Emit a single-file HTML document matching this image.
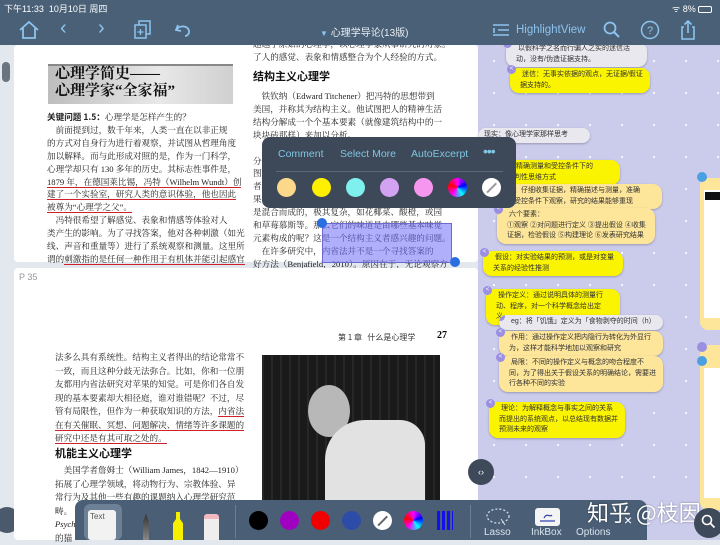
<!DOCTYPE html>
<html><head><meta charset="utf-8"><style>
*{margin:0;padding:0;box-sizing:border-box}
body{width:720px;height:540px;overflow:hidden;position:relative;background:#e3e8ef;font-family:"Liberation Sans","Noto Sans CJK SC",sans-serif}
.a{position:absolute}
.top{left:0;top:0;width:720px;height:45px;background:#4a6076;z-index:5}
.st{color:#fff;font-size:9px;top:2px}
.ic{color:#8cc4ef}
.page{background:#fff;border-radius:4px}
.bk{font-family:"Liberation Serif","Noto Serif CJK SC",serif;font-size:8.6px;line-height:12.9px;color:#222;white-space:nowrap}
.ul{border-bottom:1.5px solid #d0202a}
.rp{left:478px;top:45px;width:242px;height:495px;background:#cbcbec;background-image:radial-gradient(circle,#fff 0.8px,transparent 1.2px);background-size:32px 32px}
.card{position:absolute;border-radius:9px;font-size:7px;line-height:10.5px;color:#333;padding:2px 6px 2px 10px;box-shadow:0 1px 2px rgba(0,0,0,.25)}
.y{background:#fbf400}.o{background:#fde59a}.g{background:#e8e8ee}
.bt{position:absolute;width:9px;height:9px;border-radius:50%;background:#9a8fe0;left:-3px;top:-3px;color:#fff;font-size:6px;line-height:9px;text-align:center}
.pop{left:262px;top:137px;width:254px;height:71px;background:#3d4858;border-radius:8px;z-index:3}
.pt{color:#7fc6e2;font-size:10.5px;top:11px}
.c{position:absolute;width:19px;height:19px;border-radius:50%;top:41px}
.tb{left:75px;top:500px;width:572px;height:40px;background:#4a5f76;border-radius:8px 8px 0 0}
.cc{position:absolute;width:19px;height:19px;border-radius:50%;top:11px}
.lb{position:absolute;color:#d8e4f0;font-size:10px;top:27px}
</style></head><body>
<!-- top bar -->
<div class="a top">
<div class="a st" style="left:4px">下午11:33&nbsp; 10月10日 周四</div>
<div class="a st" style="left:672px">ᯤ 8% <span style="display:inline-block;width:14px;height:7px;border:1px solid #fff;border-radius:2px;vertical-align:middle"></span></div>
<svg class="a" style="left:18px;top:20px" width="22" height="20" viewBox="0 0 22 20"><path d="M2 10 L11 2 L20 10 M5 8 V18 H17 V8" fill="none" stroke="#8cc4ef" stroke-width="1.8"/></svg>
<div class="a ic" style="left:60px;top:17px;font-size:20px">‹</div>
<div class="a ic" style="left:98px;top:17px;font-size:20px">›</div>
<svg class="a" style="left:134px;top:20px" width="18" height="20"><rect x="5" y="1" width="11" height="13" fill="none" stroke="#8cc4ef" stroke-width="1.5"/><rect x="1" y="5" width="11" height="13" fill="#4a6076" stroke="#8cc4ef" stroke-width="1.5"/><path d="M6.5 9v6M3.5 12h6" stroke="#8cc4ef" stroke-width="1.3"/></svg>
<svg class="a" style="left:174px;top:22px" width="18" height="16"><path d="M4 3 L2 8 L7 9 M2.5 8 C5 3 14 3 15 9 C15.5 12 13 14 11 14" fill="none" stroke="#8cc4ef" stroke-width="1.8"/></svg>
<div class="a" style="left:320px;top:24px;color:#e8eef4;font-size:10px"><span style="color:#8cc4ef;font-size:8px">▼</span> 心理学导论(13版)</div>
<svg class="a" style="left:492px;top:22px" width="18" height="16"><path d="M1 3h16M6 8h11M1 13h16M2 6v5" stroke="#8cc4ef" stroke-width="1.6"/></svg>
<div class="a ic" style="left:516px;top:24px;font-size:11.5px">HighlightView</div>
<svg class="a" style="left:603px;top:21px" width="18" height="18"><circle cx="7" cy="7" r="5.5" fill="none" stroke="#8cc4ef" stroke-width="1.8"/><path d="M11 11l5 5" stroke="#8cc4ef" stroke-width="2"/></svg>
<svg class="a" style="left:640px;top:20px" width="20" height="20"><circle cx="10" cy="10" r="8.5" fill="none" stroke="#8cc4ef" stroke-width="1.5"/><text x="10" y="14" font-size="11" fill="#8cc4ef" text-anchor="middle" font-family="Liberation Sans">?</text></svg>
<svg class="a" style="left:680px;top:19px" width="16" height="22"><path d="M4 8H2v12h12V8h-2M8 14V2M4.5 5.5L8 2l3.5 3.5" fill="none" stroke="#8cc4ef" stroke-width="1.6"/></svg>
</div>
<!-- left gutter -->
<div class="a" style="left:2px;top:62px;width:8px;height:20px;background:#6a7480;border-radius:4px"></div>
<div class="a" style="left:-6px;top:507px;width:26px;height:26px;background:#4a5a6c;border-radius:50%"></div>
<!-- page 1 -->
<div class="a page" style="left:14px;top:45px;width:464px;height:217px"></div>
<div class="a" style="left:48px;top:64px;width:185px;height:40px;background:linear-gradient(90deg,#bdbdbd,#e8e8e8 60%,#d0d0d0);border-top:2px solid #888"></div>
<div class="a" style="left:55px;top:66px;font-family:'Liberation Serif','Noto Serif CJK SC',serif;font-weight:bold;font-size:15px;line-height:17px;color:#111">心理学简史——<br>心理学家“全家福”</div>
<div class="a bk" style="left:47px;top:111px"><b style="font-family:'Noto Sans CJK SC'">关键问题 1.5：</b>心理学是怎样产生的？<br>
&nbsp;&nbsp;&nbsp;&nbsp;前面提到过，数千年来，人类一直在以非正规<br>
的方式对自身行为进行着观察，并试图从哲理角度<br>
加以解释。而与此形成对照的是，作为一门科学，<br>
心理学却只有 130 多年的历史。其标志性事件是，<br>
<span class="ul">1879 年，在德国莱比锡，冯特（Wilhelm Wundt）创</span><br>
<span class="ul">建了一个实验室，研究人类的意识体验，他也因此</span><br>
<span class="ul">被尊为“心理学之父”。</span><br>
&nbsp;&nbsp;&nbsp;&nbsp;冯特很希望了解感觉、表象和情感等体验对人<br>
类产生的影响。为了寻找答案，他对各种刺激（如光<br>
线、声音和重量等）进行了系统观察和测量。这里所<br>
谓的<span class="ul">刺激指的是任何一种作用于有机体并能引起感官</span></div>
<div class="a bk" style="left:253px;top:38px">超越了原始的心理学，以心理学家从事研究的对象。<br>了人的感觉、表象和情感整合为个人经验的方式。</div>
<div class="a" style="left:253px;top:68px;font-family:'Noto Sans CJK SC',sans-serif;font-weight:bold;font-size:11px;color:#111">结构主义心理学</div>
<div class="a bk" style="left:253px;top:90px">&nbsp;&nbsp;&nbsp;&nbsp;铁钦纳（Edward Titchener）把冯特的思想带到<br>美国，并称其为结构主义。他试图把人的精神生活<br>结构分解成一个个基本要素（就像建筑结构中的一<br>块块砖那样）来加以分析。<br><br>分析人的味觉体验，他认为感觉及其组合可以解释<br>图像，如某种水果的味道，可以分解为甜、酸、<br>者，苦等基本要素的组合，但是大部分<br>果，味道<br>是混合而成的，极其复杂，如花椰菜、酸橙，或园<br>和草莓慕斯等。那么它们的味道是由哪些基本味觉<br>元素构成的呢？这是一个结构主义者感兴趣的问题。<br>&nbsp;&nbsp;&nbsp;&nbsp;在许多研究中，内省法并不是一个寻找答案的<br>好方法（Benjafield，2010）。原因在于，无论观察方</div>
<div class="a" style="left:322px;top:223px;width:130px;height:40px;background:rgba(110,110,250,.55);border:1px solid #6a6ad0"></div>
<div class="a" style="left:317px;top:218px;width:10px;height:10px;border-radius:50%;background:#2a6ee0"></div>
<div class="a" style="left:450px;top:257px;width:10px;height:10px;border-radius:50%;background:#2a6ee0"></div>
<!-- page 2 -->
<div class="a page" style="left:14px;top:268px;width:464px;height:272px"></div>
<div class="a" style="left:19px;top:272px;font-size:9px;color:#999">P 35</div>
<div class="a" style="left:338px;top:332px;font-size:8px;color:#333;font-family:'Noto Sans CJK SC'">第 1 章&nbsp;&nbsp;&nbsp;什么是心理学</div>
<div class="a" style="left:437px;top:330px;font-size:10px;font-weight:bold;font-family:'Liberation Serif'">27</div>
<div class="a bk" style="left:55px;top:351px;line-height:13.5px">法多么具有系统性。结构主义者得出的结论常常不<br>一致，而且这种分歧无法弥合。比如，你和一位朋<br>友都用内省法研究对苹果的知觉。可是你们各自发<br>现的基本要素却大相径庭，谁对谁错呢？不过，尽<br>管有局限性，但作为一种获取知识的方法，<span class="ul">内省法</span><br><span class="ul">在有关催眠、冥想、问题解决、情绪等许多课题的</span><br><span class="ul">研究中还是有其可取之处的。</span></div>
<div class="a" style="left:55px;top:445px;font-family:'Noto Sans CJK SC',sans-serif;font-weight:bold;font-size:11px;color:#111">机能主义心理学</div>
<div class="a bk" style="left:55px;top:464px;line-height:13.5px">&nbsp;&nbsp;&nbsp;&nbsp;美国学者詹姆士（William James，1842—1910）<br>拓展了心理学领域，将动物行为、宗教体验、异<br>常行为及其他一些有趣的课题纳入心理学研究范<br>畴。<br><i>Psych</i><br>的猫</div>
<div class="a" style="left:262px;top:355px;width:178px;height:185px;background:#1a1a1a;background-image:repeating-linear-gradient(90deg,rgba(255,255,255,.06) 0 2px,transparent 2px 9px)"></div>
<div class="a" style="left:308px;top:385px;width:42px;height:52px;border-radius:50%;background:#b8b8b8"></div>
<div class="a" style="left:325px;top:420px;width:100px;height:120px;background:#e2e2e2;border-radius:40px 25px 0 0"></div>
<!-- right panel -->
<div class="a rp"></div>
<div class="card g" style="left:506px;top:42px;width:141px">&nbsp;以假科学之名而行骗人之实的迷信活动，没有/伪造证据支持。<span class="bt">&lt;</span></div>
<div class="card y" style="left:510px;top:68px;width:140px">&nbsp;迷信：无事实依据的观点，无证据/假证据支持的。<span class="bt">&lt;</span></div>
<div class="card g" style="left:478px;top:128px;width:112px;padding-left:6px">现实：像心理学家那样思考</div>
<div class="card y" style="left:490px;top:160px;width:130px">&nbsp;：以精确测量和受控条件下的<br>的批判性思维方式</div>
<div class="card o" style="left:495px;top:184px;width:167px">&nbsp;法：仔细收集证据，精确描述与测量，准确<br>&nbsp;在受控条件下观察，研究的结果能够重现</div>
<div class="card o" style="left:497px;top:208px;width:158px">&nbsp;六个要素：<br>①观察 ②对问题进行定义 ③提出假设 ④收集证据，检验假设 ⑤构建理论 ⑥发表研究结果<span class="bt">&lt;</span></div>
<div class="card y" style="left:483px;top:251px;width:140px">&nbsp;假设：对实验结果的预测，或是对变量关系的经验性推测<span class="bt">&lt;</span></div>
<div class="card y" style="left:486px;top:289px;width:134px">&nbsp;操作定义：通过说明具体的测量行动、程序，对一个科学概念给出定义。<span class="bt">&lt;</span></div>
<div class="card g" style="left:499px;top:315px;width:164px;white-space:nowrap;overflow:hidden">&nbsp;eg：将「饥饿」定义为「食物剥夺的时间（h）<span class="bt">&lt;</span></div>
<div class="card o" style="left:499px;top:331px;width:164px">&nbsp;作用：通过操作定义把内隐行为转化为外显行为，这样才能科学地加以观察和研究<span class="bt">&lt;</span></div>
<div class="card o" style="left:499px;top:356px;width:164px">&nbsp;局限：不同的操作定义与概念的吻合程度不同，为了得出关于假设关系的明确结论，需要进行各种不同的实验<span class="bt">&lt;</span></div>
<div class="card y" style="left:489px;top:402px;width:136px">&nbsp;理论：为解释概念与事实之间的关系而提出的系统观点，以总结现有数据并预测未来的观察<span class="bt">&lt;</span></div>
<div class="a" style="left:700px;top:178px;width:24px;height:152px;background:#fde59a;border-radius:8px 0 0 8px"></div>
<div class="a" style="left:704px;top:190px;width:20px;height:128px;background:#fff"></div>
<div class="a" style="left:705px;top:192px;width:15px;height:8px;background:#111"></div>
<div class="a" style="left:697px;top:172px;width:10px;height:10px;border-radius:50%;background:#4aa0e0"></div>
<div class="a" style="left:700px;top:345px;width:24px;height:165px;background:#fde59a;border-radius:8px 0 0 8px"></div>
<div class="a" style="left:704px;top:368px;width:20px;height:130px;background:#fff"></div>
<div class="a" style="left:697px;top:342px;width:10px;height:10px;border-radius:50%;background:#9a8fe0"></div>
<div class="a" style="left:697px;top:356px;width:10px;height:10px;border-radius:50%;background:#4aa0e0"></div>
<div class="a" style="left:468px;top:459px;width:26px;height:26px;border-radius:50%;background:#3e4a5a;color:#fff;font-size:9px;line-height:26px;text-align:center">‹›</div>
<!-- popup -->
<div class="a pop">
<div class="a pt" style="left:16px">Comment</div>
<div class="a pt" style="left:78px">Select More</div>
<div class="a pt" style="left:149px">AutoExcerpt</div>
<div class="a pt" style="left:221px;font-size:14px;top:6px;letter-spacing:-1px">•••</div>
<div class="a" style="left:14px;top:34px;width:227px;height:1px;background:#5d6878"></div>
<div class="c" style="left:15px;background:#fcd98a"></div>
<div class="c" style="left:50px;background:#fff000"></div>
<div class="c" style="left:84px;background:#80f0ee"></div>
<div class="c" style="left:118px;background:#d4a2f2"></div>
<div class="c" style="left:152px;background:#f796ef"></div>
<div class="c" style="left:186px;background:conic-gradient(#f0f,#00f,#0ff,#f0f,#f00,#f0f)"></div>
<div class="c" style="left:220px;background:#fff"><div style="position:absolute;left:3px;top:9px;width:13px;height:1.5px;background:#999;transform:rotate(-45deg)"></div></div>
</div>
<!-- bottom toolbar -->
<div class="a tb">
<div class="a" style="left:9px;top:4px;width:38px;height:36px;background:#6c8096;border-radius:6px"></div>
<div class="a" style="left:13px;top:10px;width:28px;height:30px;background:#f2f2f2;border-radius:3px;font-size:8px;color:#555;padding:2px">Text</div>
<div class="a" style="left:68px;top:14px;width:6px;height:26px;background:linear-gradient(#333,#888);clip-path:polygon(50% 0,100% 30%,100% 100%,0 100%,0 30%)"></div>
<div class="a" style="left:98px;top:12px;width:10px;height:28px;background:#f6f000;clip-path:polygon(30% 0,70% 0,70% 25%,100% 40%,100% 100%,0 100%,0 40%,30% 25%)"></div>
<div class="a" style="left:129px;top:14px;width:15px;height:26px;background:linear-gradient(#f4b8c0 0,#f4b8c0 20%,#eee 20%);border-radius:3px 3px 0 0"></div>
<div class="a" style="left:160px;top:5px;width:1px;height:33px;background:#6b7e92"></div>
<div class="cc" style="left:174px;background:#000"></div>
<div class="cc" style="left:205px;background:#a000c0"></div>
<div class="cc" style="left:236px;background:#f00000"></div>
<div class="cc" style="left:267px;background:#2c4ca8"></div>
<div class="cc" style="left:298px;background:#fff"><div style="position:absolute;left:3px;top:9px;width:13px;height:1.5px;background:#666;transform:rotate(-45deg)"></div></div>
<div class="cc" style="left:329px;background:conic-gradient(#f0f,#00f,#0ff,#f0f,#f00,#f0f)"></div>
<div class="a" style="left:362px;top:11px;width:16px;height:19px;background:repeating-linear-gradient(90deg,#1010f0 0 3px,transparent 3px 5px)"></div>
<div class="a" style="left:395px;top:5px;width:1px;height:33px;background:#6b7e92"></div>
<svg class="a" style="left:410px;top:7px" width="26" height="20"><ellipse cx="13" cy="9" rx="11" ry="7" fill="none" stroke="#d0dce8" stroke-width="1.3" stroke-dasharray="2 2"/><path d="M16 12l4 6" stroke="#d0dce8"/></svg>
<div class="lb" style="left:409px">Lasso</div>
<div class="a" style="left:460px;top:8px;width:25px;height:18px;background:#f4f4f4;border-radius:3px"><svg width="25" height="18"><path d="M5 13h15M9 10c3-6 6 0 8-3" fill="none" stroke="#3040b0" stroke-width="1.2"/></svg></div>
<div class="lb" style="left:456px">InkBox</div>
<div class="lb" style="left:501px">Options</div>
</div>
<div class="a" style="left:587px;top:496px;color:#fff;font-size:22px;font-family:'Noto Sans CJK SC',sans-serif;text-shadow:0 0 2px rgba(0,0,0,.4)">知乎 @枝因</div>
<div class="a" style="left:624px;top:512px;color:#fff;font-size:14px">×</div>
<div class="a" style="left:694px;top:508px;width:30px;height:30px;border-radius:50%;background:#3e4a5a"></div>
<svg class="a" style="left:701px;top:514px" width="16" height="16"><circle cx="6" cy="6" r="4.5" fill="none" stroke="#fff" stroke-width="1.6"/><path d="M9.5 9.5l4 4" stroke="#fff" stroke-width="1.8"/></svg>
</body></html>
